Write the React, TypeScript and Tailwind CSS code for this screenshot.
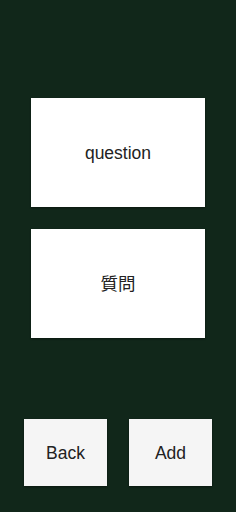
export default function App() {
  return (
    <div
      className="flex h-[512px] w-[236px] flex-col bg-[#11271a]"
      style={{ fontFamily: '"Liberation Sans", "Noto Sans CJK JP", sans-serif' }}
    >
      <div className="flex flex-col gap-[22px] pl-[31px] pr-[31px] pt-[98px]">
        <div className="flex h-[109px] items-center justify-center bg-white pt-[2px] text-[17.5px] text-[#222] shadow-[0_1px_2px_rgba(0,0,0,0.4)]">
          question
        </div>
        <div className="flex h-[109px] items-center justify-center bg-white pt-[2px] text-[17.5px] text-[#222] shadow-[0_1px_2px_rgba(0,0,0,0.4)]">
          質問
        </div>
      </div>
      <div className="mt-auto mb-[26px] flex justify-between px-[24px]">
        <button className="flex h-[67px] w-[83px] items-center justify-center bg-[#f5f5f5] pt-[2px] text-[17.5px] text-[#222] shadow-[0_1px_2px_rgba(0,0,0,0.4)]">
          Back
        </button>
        <button className="flex h-[67px] w-[83px] items-center justify-center bg-[#f5f5f5] pt-[2px] text-[17.5px] text-[#222] shadow-[0_1px_2px_rgba(0,0,0,0.4)]">
          Add
        </button>
      </div>
    </div>
  );
}
